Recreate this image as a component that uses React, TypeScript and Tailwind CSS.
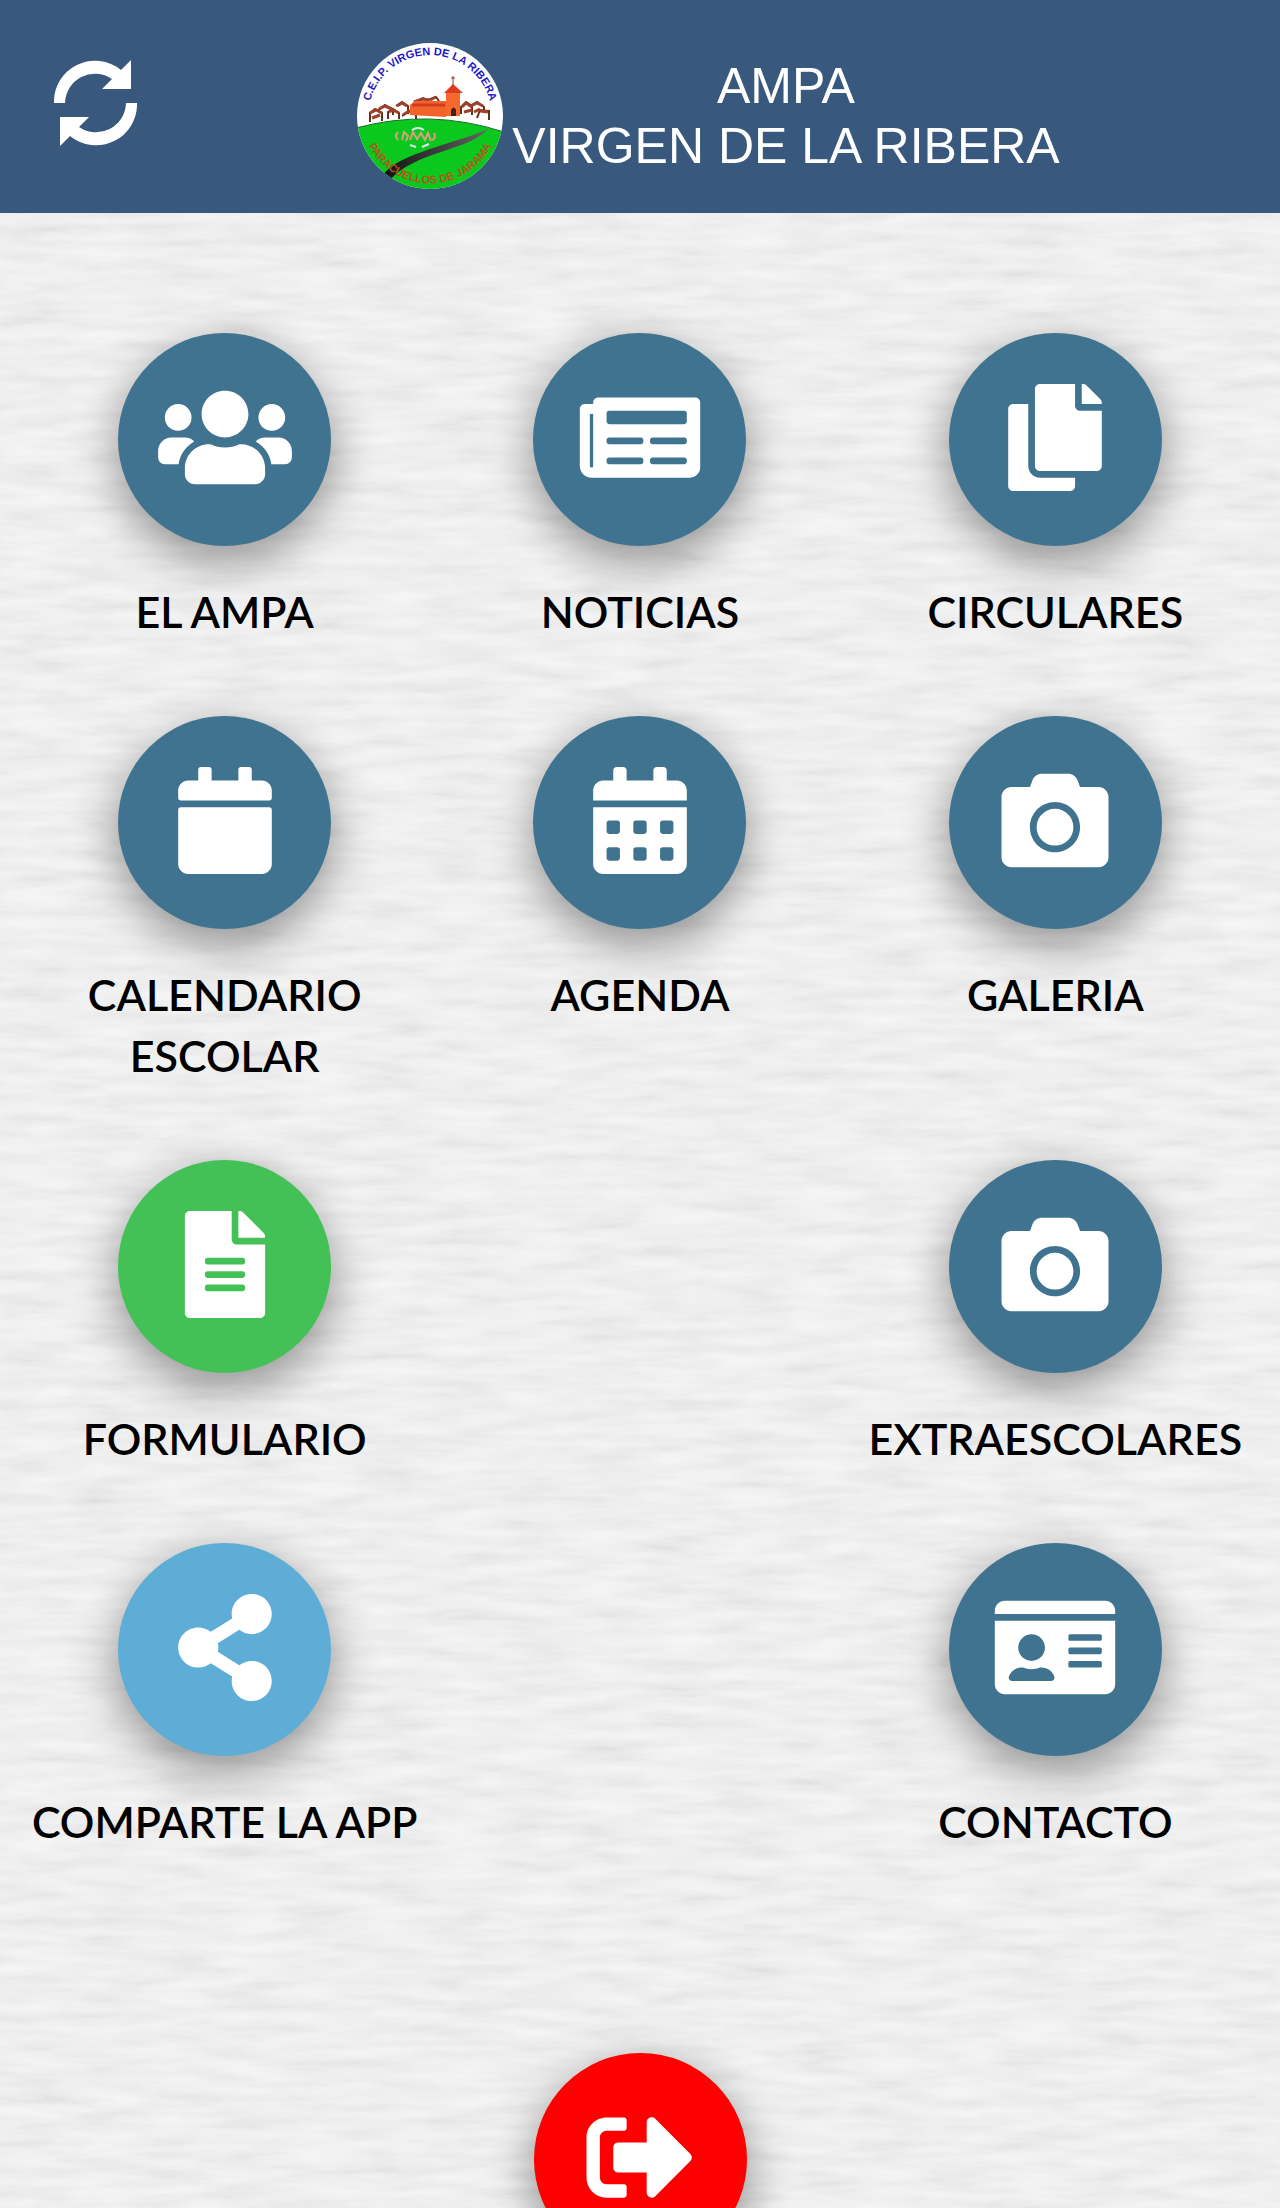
import type { IconType } from "react-icons";
import {
  FaCalendar,
  FaCalendarAlt,
  FaCamera,
  FaCopy,
  FaFileAlt,
  FaIdCard,
  FaNewspaper,
  FaShareAlt,
  FaSignOutAlt,
  FaUsers,
} from "react-icons/fa";

type MenuItem = {
  label: string;
  icon: IconType;
  color: string;
  column: string;
};

const items: MenuItem[] = [
  { label: "EL AMPA", icon: FaUsers, color: "bg-[#40738f]", column: "col-start-1" },
  { label: "NOTICIAS", icon: FaNewspaper, color: "bg-[#40738f]", column: "col-start-2" },
  { label: "CIRCULARES", icon: FaCopy, color: "bg-[#40738f]", column: "col-start-3" },
  { label: "CALENDARIO ESCOLAR", icon: FaCalendar, color: "bg-[#40738f]", column: "col-start-1" },
  { label: "AGENDA", icon: FaCalendarAlt, color: "bg-[#40738f]", column: "col-start-2" },
  { label: "GALERIA", icon: FaCamera, color: "bg-[#40738f]", column: "col-start-3" },
  { label: "FORMULARIO", icon: FaFileAlt, color: "bg-[#43c157]", column: "col-start-1" },
  { label: "EXTRAESCOLARES", icon: FaCamera, color: "bg-[#40738f]", column: "col-start-3" },
  { label: "COMPARTE LA APP", icon: FaShareAlt, color: "bg-[#5dadd7]", column: "col-start-1" },
  { label: "CONTACTO", icon: FaIdCard, color: "bg-[#40738f]", column: "col-start-3" },
];

function RefreshIcon() {
  return (
    <svg viewBox="0 0 83 86" className="w-[83px] h-[86px] fill-white" aria-hidden="true">
      <path d="M0 43A41 41 0 0 1 67 10L77 0V29H48L58 19A30 30 0 0 0 11 43Z" />
      <path d="M83 43A41 41 0 0 1 16 76L6 86V57H35L25 67A30 30 0 0 0 72 43Z" />
    </svg>
  );
}

function SchoolLogo() {
  return (
    <svg viewBox="0 0 148 148" className="w-[148px] h-[148px] shrink-0" role="img" aria-label="C.E.I.P. Virgen de la Ribera">
      <defs>
        <clipPath id="logo-clip">
          <circle cx="74" cy="74" r="73" />
        </clipPath>
        <linearGradient id="road" x1="0" x2="1">
          <stop offset="0" stopColor="#111" />
          <stop offset="1" stopColor="#666" />
        </linearGradient>
        <path id="arc-top" d="M13 64A62 62 0 0 1 135 64" />
        <path id="arc-bottom" d="M6 84A69 69 0 0 0 142 84" />
      </defs>
      <g clipPath="url(#logo-clip)">
        <rect width="148" height="148" fill="#fff" />
        <path d="M0 86Q74 66 148 90V148H0z" fill="#0bc81f" stroke="#176b25" strokeWidth="1" />
        <path d="M26 134C38 118 60 112 86 103C108 96 122 92 133 86C122 98 106 103 88 109C66 116 46 124 34 138z" fill="url(#road)" />
      </g>
      {/* Casas del pueblo */}
      <g fill="#fff" stroke="#66301b" strokeWidth="2">
        <path d="M14 80v-9l5-4 7 4v8M22 68l7-5 8 5v5M32 77v-7l5-3 6 4v6M40 64l6-4 6 4v8M46 74l7-5 7 4v4M58 60l9-4 6 3M72 58l8-3 3 4M105 72v-7l5-5 6 4v9M114 64l7-4 7 5v5M121 76l3-8 9 1v9" />
      </g>
      <path d="M14 71l6-3 6 3M23 67l6-3 7 3M33 70l4-2 6 3M41 64l5-3 5 3M47 73l6-4 6 3M58 60l9-3 6 1M74 58l6-3M106 65l4-4 6 4M115 64l6-3 6 3M124 69l8 1M16 76l8-3M108 70l8-2M118 70l6-3" fill="none" stroke="#a0402a" strokeWidth="3" />
      <path d="M54 63l5-4h31v16L54 73z" fill="#f2632a" />
      <path d="M56 63h33" stroke="#d33a20" strokeWidth="3" />
      <path d="M90 50h14v24H90z" fill="#f56a2c" />
      <path d="M88 51l9-9 10 9z" fill="#df3920" />
      <path d="M97 34v9M95 36h4" stroke="#8a3a29" strokeWidth="1" />
      <path d="M95 74v-6q3-5 5 0v6z" fill="#432017" />
      {/* Flores */}
      <g fill="none" strokeWidth="2">
        <path d="M42 90q-4 4 0 8M46 98l2-8 4 4-2 5M54 98l3-8 4 7 4-6 4 7 3-7 3 8M76 98q5-2 2-7" stroke="#d9a07a" />
        <path d="M56 88q6-4 12 0M54 103l6 2M66 105l7-3" stroke="#dfe6ee" />
      </g>
      <text fill="#1d18c9" className="text-[11px] font-bold font-['Liberation_Sans']">
        <textPath href="#arc-top" startOffset="50%" textAnchor="middle">C.E.I.P. VIRGEN DE LA RIBERA</textPath>
      </text>
      <text fill="#b8521a" className="text-[11px] font-bold font-['Liberation_Sans']">
        <textPath href="#arc-bottom" startOffset="50%" textAnchor="middle">PARACUELLOS DE JARAMA</textPath>
      </text>
    </svg>
  );
}

function PaperTexture() {
  return (
    <svg className="absolute inset-0 w-full h-full" aria-hidden="true">
      <filter id="paper" x="0" y="0" width="100%" height="100%">
        <feTurbulence type="fractalNoise" baseFrequency="0.014 0.085" numOctaves="4" seed="8" />
        <feColorMatrix values="0.13 0 0 0 0.84  0.13 0 0 0 0.84  0.13 0 0 0 0.84  0 0 0 0 1" colorInterpolationFilters="sRGB" />
      </filter>
      <rect width="100%" height="100%" filter="url(#paper)" />
    </svg>
  );
}

function CircleButton({ icon: Icon, color, label }: { icon: IconType; color: string; label: string }) {
  return (
    <button
      type="button"
      aria-label={label}
      className={`flex items-center justify-center w-[213px] h-[213px] pb-1 rounded-full text-white shadow-[0_14px_42px_rgba(0,0,0,0.25),0_16px_53px_rgba(0,0,0,0.19)] ${color}`}
    >
      <Icon className="w-[134px] h-[107px]" />
    </button>
  );
}

export default function App() {
  return (
    <div className="relative flex flex-col h-screen overflow-hidden bg-[#ececec] font-['Lato',sans-serif] text-black">
      <PaperTexture />

      <header className="relative grid grid-cols-[1fr_auto_1fr] items-center h-[213px] shrink-0 px-[54px] bg-[#38597d]">
        <button type="button" aria-label="Actualizar" className="w-[83px] pb-2">
          <RefreshIcon />
        </button>
        <div className="flex items-center gap-2 ml-[136px] pt-[18px]">
          <SchoolLogo />
          <h1 className="text-center text-[50px] leading-[60px] text-white whitespace-nowrap font-['Liberation_Sans',sans-serif]">
            AMPA
            <br />
            VIRGEN DE LA RIBERA
          </h1>
        </div>
      </header>

      <main className="relative flex-1 overflow-y-auto px-[17px] pt-[120px]">
        <nav className="grid grid-cols-3 gap-y-[74px]">
          {items.map((item) => (
            <div key={item.label} className={`flex flex-col items-center gap-[35px] ${item.column}`}>
              <CircleButton icon={item.icon} color={item.color} label={item.label} />
              <span className="px-2 text-center text-[43px] leading-[61px] font-semibold">{item.label}</span>
            </div>
          ))}
        </nav>

        {/* Salir */}
        <div className="flex justify-center pt-[201px] pb-16">
          <CircleButton icon={FaSignOutAlt} color="bg-[#ff0000]" label="Salir" />
        </div>
      </main>
    </div>
  );
}
